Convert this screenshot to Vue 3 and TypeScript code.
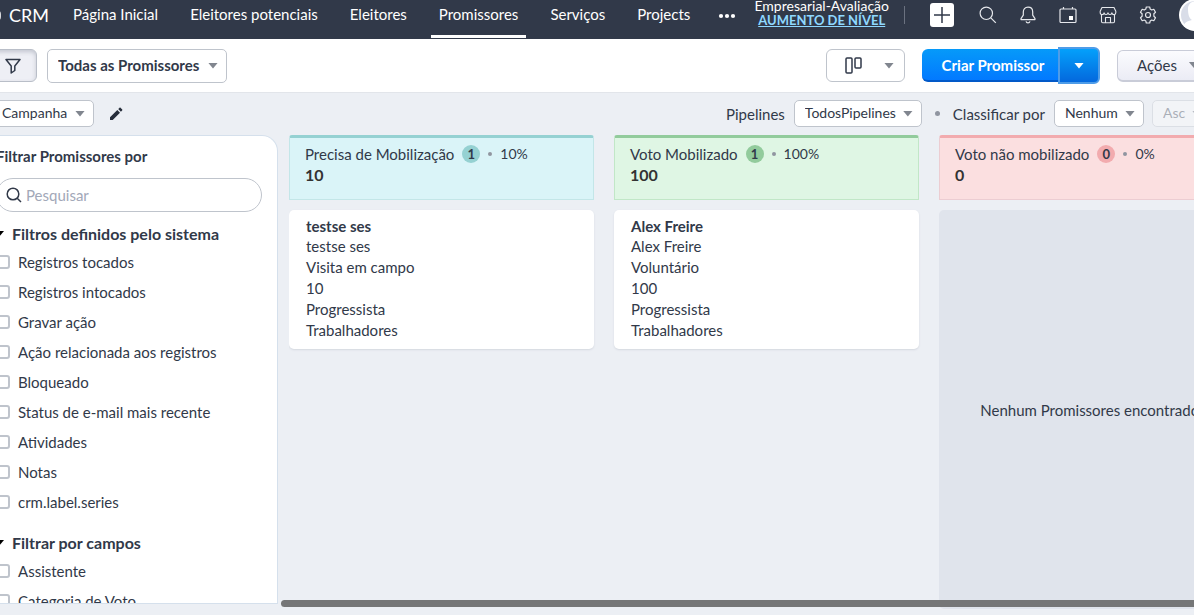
<script setup lang="ts">
import { ref } from 'vue'

interface Column {
  title: string
  count: number
  percent: string
  total: string
  tone: string
  cards: { name: string; lines: string[] }[]
}

const modules = ['Página Inicial', 'Eleitores potenciais', 'Eleitores', 'Promissores', 'Serviços', 'Projects']
const active = ref('Promissores')

const groups = [
  {
    title: 'Filtros definidos pelo sistema',
    items: [
      'Registros tocados',
      'Registros intocados',
      'Gravar ação',
      'Ação relacionada aos registros',
      'Bloqueado',
      'Status de e-mail mais recente',
      'Atividades',
      'Notas',
      'crm.label.series',
    ],
  },
  { title: 'Filtrar por campos', items: ['Assistente', 'Categoria de Voto'] },
]

const columns: Column[] = [
  {
    title: 'Precisa de Mobilização',
    count: 1,
    percent: '10%',
    total: '10',
    tone: 'teal',
    cards: [{ name: 'testse ses', lines: ['testse ses', 'Visita em campo', '10', 'Progressista', 'Trabalhadores'] }],
  },
  {
    title: 'Voto Mobilizado',
    count: 1,
    percent: '100%',
    total: '100',
    tone: 'green',
    cards: [{ name: 'Alex Freire', lines: ['Alex Freire', 'Voluntário', '100', 'Progressista', 'Trabalhadores'] }],
  },
  { title: 'Voto não mobilizado', count: 0, percent: '0%', total: '0', tone: 'red', cards: [] },
]
</script>

<template>
  <div class="viewport">
    <div class="page">
      <header class="topbar">
        <a class="brand" href="#">
          <svg width="21" height="18" viewBox="0 0 21 18" fill="none" stroke="#fff" stroke-width="1.6">
            <rect x="8" y="4" width="12" height="11" rx="4" />
          </svg>
          <span>CRM</span>
        </a>
        <nav class="modules">
          <a
            v-for="m in modules"
            :key="m"
            href="#"
            :class="{ active: m === active }"
            @click.prevent="active = m"
          >{{ m }}</a>
        </nav>
        <button class="plain more" aria-label="Mais">
          <svg width="18" height="6" viewBox="0 0 18 6" fill="#fff">
            <circle cx="3" cy="3" r="2.1" /><circle cx="9" cy="3" r="2.1" /><circle cx="15" cy="3" r="2.1" />
          </svg>
        </button>
        <div class="tools">
          <div class="plan">
            <span>Empresarial-Avaliação</span>
            <a href="#">AUMENTO DE NÍVEL</a>
          </div>
          <span class="divider"></span>
          <button class="plain add" aria-label="Criar">
            <svg width="24" height="24" viewBox="0 0 24 24" fill="none" stroke="#313949" stroke-width="1.5">
              <path d="M12 4v16M4 12h16" />
            </svg>
          </button>
          <button class="plain" aria-label="Buscar">
            <svg width="18" height="18" viewBox="0 0 18 18" fill="none" stroke="#e6e8ec" stroke-width="1.2">
              <circle cx="7.3" cy="7.3" r="6.2" /><path d="M11.8 11.8l5 5" />
            </svg>
          </button>
          <button class="plain" aria-label="Notificações">
            <svg width="18" height="18" viewBox="0 0 18 18" fill="none" stroke="#e6e8ec" stroke-width="1.2" stroke-linejoin="round">
              <path d="M9 1.2C5.9 1.2 4.3 3.5 4.3 6v3.2L2 12.6v1h14v-1l-2.3-3.4V6C13.7 3.5 12.1 1.2 9 1.2z" />
              <path d="M7 15.300c.3 1 1.100 1.500 2 1.500s1.700-.5 2-1.500" />
            </svg>
          </button>
          <button class="plain" aria-label="Calendário">
            <svg width="18" height="18" viewBox="0 0 18 18" fill="none" stroke="#e6e8ec" stroke-width="1.2">
              <rect x="1" y="3" width="16" height="13.5" rx="1" /><path d="M4.5 1v2M13.5 1v2" />
              <rect x="10" y="10" width="4" height="4" fill="#fff" stroke="none" />
            </svg>
          </button>
          <button class="plain" aria-label="Marketplace">
            <svg width="18" height="18" viewBox="0 0 18 18" fill="none" stroke="#e6e8ec" stroke-width="1.1" stroke-linejoin="round">
              <path d="M3 1.500h12l1.800 3.800v1.500c0 2.400-3.500 2.400-3.900 0 -.4 2.200-3.500 2.200-3.900 0 -.4 2.200-3.500 2.200-3.900 0 -.4 2.400-3.900 2.400-3.900 0V5.300z" />
              <path d="M2.500 9v6.500c0 .8.400 1.200 1.200 1.200h10.600c.8 0 1.200-.4 1.200-1.200V9M6.500 16.500v-5h5v5" />
            </svg>
          </button>
          <button class="plain" aria-label="Configurações">
            <svg width="18" height="18" viewBox="0 0 18 18" fill="none" stroke="#e6e8ec" stroke-width="1.2" stroke-linejoin="round">
              <path d="M7.300 1h3.400l.5 2.100 1.500.9 2.100-.7 1.700 2.900-1.600 1.500v2.600l1.600 1.500-1.700 2.900-2.100-.7-1.500.9-.5 2.100H7.300l-.5-2.100-1.500-.9-2.100.7-1.700-2.900 1.600-1.500V7.700L1.500 6.200l1.700-2.900 2.100.7 1.500-.9z" />
              <circle cx="9" cy="9" r="2.5" />
            </svg>
          </button>
          <button class="plain avatar" aria-label="Perfil">
            <svg width="32" height="32" viewBox="0 0 32 32">
              <circle cx="16" cy="16" r="16" fill="#fff" /><circle cx="16" cy="16" r="14" fill="#d9dde8" />
              <path d="M9 10c0-10 14-10 14 0 0 5-1 9-4 11 5 1 8 3 8 6a16 16 0 0 1-22 0c0-3 3-5 8-6-3-2-4-6-4-11z" fill="#fff" />
            </svg>
          </button>
        </div>
      </header>

      <div class="toolbar">
        <button class="filter-toggle" aria-label="Filtro">
          <svg width="16" height="16" viewBox="0 0 16 16" fill="none" stroke="#313949" stroke-width="1.5" stroke-linejoin="round">
            <path d="M1 1.500h14L9.800 8v4.500l-3.600 2.500V8z" />
          </svg>
        </button>
        <span class="pick view">
          <select aria-label="Visualização"><option>Todas as Promissores</option></select>
        </span>
        <div class="actions">
          <button class="layout" aria-label="Modo de exibição">
            <svg width="17" height="17" viewBox="0 0 17 17" fill="none" stroke="#313949" stroke-width="1.5">
              <rect x="1" y="1" width="6" height="15" rx="1" /><rect x="10" y="1" width="6" height="10" rx="1" />
            </svg>
            <i class="caret"></i>
          </button>
          <div class="split">
            <button class="create">Criar Promissor</button>
            <button class="create-more" aria-label="Mais opções"><i class="caret"></i></button>
          </div>
          <button class="acts">Ações<i class="caret"></i></button>
        </div>
      </div>

      <div class="subbar">
        <span class="pick campaign">
          <select aria-label="Modo"><option>Campanha</option></select>
        </span>
        <button class="plain" aria-label="Editar">
          <svg width="14" height="14" viewBox="0 0 14 14" fill="#272e3b">
            <path d="M1 10.300L8.300 3l2.700 2.700L3.700 13H1zM9.200 2.100l1.200-1.200c.4-.4.9-.4 1.300 0l1.400 1.400c.4.400.4.900 0 1.300l-1.200 1.200z" />
          </svg>
        </button>
        <div class="sorting">
          <label for="pipe">Pipelines</label>
          <span class="pick pipe"><select id="pipe"><option>TodosPipelines</option></select></span>
          <span class="dot"></span>
          <label for="sort">Classificar por</label>
          <span class="pick sort"><select id="sort"><option>Nenhum</option></select></span>
          <span class="pick order"><select aria-label="Ordem" disabled><option>Asc</option></select></span>
        </div>
      </div>

      <main class="content">
        <aside class="sidebar">
          <h2>Filtrar Promissores por</h2>
          <div class="search">
            <svg width="16" height="16" viewBox="0 0 16 16" fill="none" stroke="#313949" stroke-width="1.5">
              <circle cx="7" cy="7" r="5.8" /><path d="M11.2 11.2l3.800 3.800" />
            </svg>
            <input type="search" placeholder="Pesquisar" aria-label="Pesquisar" />
          </div>
          <section v-for="g in groups" :key="g.title">
            <h3><i class="caret"></i>{{ g.title }}</h3>
            <label v-for="item in g.items" :key="item"><input type="checkbox" />{{ item }}</label>
          </section>
        </aside>

        <div class="board">
          <section v-for="c in columns" :key="c.title" class="column">
            <header :class="['stage', c.tone]">
              <div class="stage-line">
                <span class="name">{{ c.title }}</span>
                <span class="count">{{ c.count }}</span>
                <span class="dot small"></span>
                <span>{{ c.percent }}</span>
              </div>
              <strong>{{ c.total }}</strong>
            </header>
            <article v-for="card in c.cards" :key="card.name" class="card">
              <a href="#">{{ card.name }}</a>
              <p v-for="line in card.lines" :key="line">{{ line }}</p>
            </article>
            <div v-if="!c.cards.length" class="empty">Nenhum Promissores encontrado.</div>
          </section>
        </div>
        <div class="scrollbar"></div>
      </main>
    </div>
  </div>
</template>

<style>
body {
  margin: 0;
  background: #eceff4;
}
</style>

<style scoped>
* {
  box-sizing: border-box;
}
.viewport {
  height: 100vh;
  overflow: hidden;
  background: #eceff4;
  color: #313949;
  font: 15px/20px Lato, "Liberation Sans", sans-serif;
}
.page {
  height: 100%;
  margin: 0 -32px 0 -20px;
  display: flex;
  flex-direction: column;
}
button,
select,
input {
  font: inherit;
  color: inherit;
  margin: 0;
}
a {
  color: inherit;
  text-decoration: none;
}
svg {
  display: block;
  flex: none;
}
.plain {
  padding: 0;
  border: 0;
  background: none;
}
.caret {
  flex: none;
  width: 10px;
  height: 6px;
  background: #81868f;
  clip-path: polygon(0 0, 100% 0, 50% 100%);
}

.topbar {
  flex: none;
  height: 39px;
  display: flex;
  align-items: flex-start;
  background: #313949;
  color: #fff;
  overflow: hidden;
}
.brand {
  display: flex;
  align-items: center;
  gap: 8px;
  height: 29px;
  font-size: 18px;
}
.modules {
  display: flex;
  gap: 16px;
  margin-left: 16px;
}
.modules a {
  height: 38px;
  padding: 4px 8px 0;
  border-bottom: 3px solid transparent;
}
.modules a.active {
  border-color: #fff;
}
.more {
  height: 32px;
  margin-left: 20px;
}
.tools {
  display: flex;
  align-items: center;
  height: 30px;
  margin-left: auto;
  padding-right: 15px;
  gap: 22px;
}
.plan {
  display: flex;
  flex-direction: column;
  align-items: center;
  margin-bottom: 4px;
  font-size: 14px;
  line-height: 15px;
}
.plan a {
  color: #8fd8ff;
  font-size: 13px;
  font-weight: 700;
  text-decoration: underline;
}
.divider {
  width: 1px;
  height: 18px;
  margin: 0 3px 0 -7px;
  background: #6b7280;
}
.add {
  margin-right: 3px;
  background: #fff;
  border-radius: 3px;
}

.toolbar {
  flex: none;
  height: 54px;
  display: flex;
  align-items: center;
  background: #fff;
  border-bottom: 1px solid #e2e5ea;
}
.filter-toggle {
  width: 57px;
  height: 33px;
  padding: 0 15px 0 0;
  display: flex;
  align-items: center;
  justify-content: flex-end;
  border: 1px solid #b9bec8;
  border-radius: 6px;
  background: #eeeff5;
  box-shadow: inset 0 2px 4px #c3c6d0;
}
.pick {
  display: grid;
  align-items: center;
}
.pick select {
  grid-area: 1 / 1;
  width: 100%;
  height: 27px;
  padding: 0 24px 2px 10px;
  border: 1px solid #bfc4cc;
  border-radius: 5px;
  background: #fff;
  appearance: none;
  font-size: 14px;
}
.pick::after {
  content: "";
  grid-area: 1 / 1;
  justify-self: end;
  width: 10px;
  height: 6px;
  margin-right: 9px;
  background: #81868f;
  clip-path: polygon(0 0, 100% 0, 50% 100%);
  pointer-events: none;
}
.view {
  width: 180px;
  margin-left: 10px;
}
.view select {
  height: 34px;
  font-size: 15px;
  font-weight: 700;
}
.actions {
  margin-left: auto;
  display: flex;
  align-items: center;
  gap: 17px;
}
.layout {
  width: 79px;
  height: 33px;
  padding: 0 10px 0 18px;
  display: flex;
  align-items: center;
  justify-content: space-between;
  border: 1px solid #bfc4cc;
  border-radius: 6px;
  background: #fff;
}
.split {
  display: flex;
  align-items: center;
}
.create {
  width: 136px;
  height: 33px;
  padding: 0 0 0 6px;
  border: 0;
  border-bottom: 2px solid #0259c8;
  border-radius: 6px 0 0 6px;
  background: linear-gradient(#069af9, #0279ff);
  color: #fff;
  font-weight: 700;
}
.create-more {
  width: 42px;
  height: 37px;
  display: grid;
  place-items: center;
  border: 2px solid #4e9ce8;
  border-radius: 0 6px 6px 0;
  background: linear-gradient(#04a0fb, #0468dd);
}
.create-more .caret {
  background: #fff;
}
.acts {
  width: 109px;
  height: 32px;
  padding: 0 26px 0 19px;
  display: flex;
  align-items: center;
  gap: 12px;
  border: 1px solid #c9ccd8;
  border-bottom-width: 2px;
  border-radius: 6px 0 0 6px;
  background: linear-gradient(#fbfbfe, #ebecf5);
}

.subbar {
  flex: none;
  height: 42px;
  padding-bottom: 1px;
  display: flex;
  align-items: center;
}
.campaign {
  width: 114px;
  margin-right: 15px;
}
.campaign select {
  padding-left: 21px;
}
.sorting {
  margin-left: auto;
  display: flex;
  align-items: center;
}
.sorting .pick {
  margin-left: 9px;
}
.pipe {
  width: 128px;
}
.sort {
  width: 90px;
}
.sorting .order {
  width: 74px;
  margin-left: 8px;
  opacity: 0.5;
}
.order::after {
  margin-right: 24px;
}
.dot {
  width: 5px;
  height: 5px;
  margin: 0 13px;
  border-radius: 50%;
  background: #9095a0;
}
.dot.small {
  width: 4px;
  height: 4px;
  margin: 0 8px;
}

.content {
  flex: 1;
  min-height: 0;
  display: flex;
  gap: 11px;
  position: relative;
}
.sidebar {
  flex: none;
  width: 298px;
  margin-bottom: 11px;
  padding: 10px 16px 0;
  overflow: hidden;
  border: 1px solid #d5e0ec;
  border-left: 0;
  border-radius: 0 16px 0 0;
  background: #fff;
}
.sidebar h2 {
  margin: 0 0 12px;
  font-size: 15px;
  line-height: 20px;
}
.search {
  display: flex;
  align-items: center;
  gap: 4px;
  height: 34px;
  padding: 0 9px 1px;
  margin-right: -1px;
  border: 1px solid #bfc4cc;
  border-radius: 17px;
}
.search input {
  flex: 1;
  min-width: 0;
  padding: 0;
  border: 0;
  outline: 0;
  background: none;
}
.search input::placeholder {
  color: #a2a8b8;
  opacity: 1;
}
.sidebar section {
  padding-bottom: 4px;
}
.sidebar h3 {
  display: flex;
  align-items: center;
  gap: 8px;
  margin: 12px 0 3px -2px;
  font-size: 16px;
  line-height: 20px;
}
.sidebar h3 .caret {
  background: #000;
}
.sidebar label {
  display: flex;
  align-items: center;
  gap: 8px;
  height: 30px;
}
.sidebar input[type='checkbox'] {
  appearance: none;
  flex: none;
  width: 14px;
  height: 14px;
  border: 2px solid #bfc4cc;
  border-radius: 3px;
}

.board {
  flex: 1;
  min-width: 0;
  display: flex;
  gap: 20px;
  overflow: hidden;
  margin-bottom: 6px;
}
.column {
  flex: none;
  width: 305px;
  display: flex;
  flex-direction: column;
  gap: 10px;
}
.stage {
  height: 65px;
  padding: 7px 15px 0;
  border: 1px solid;
  border-top-width: 3px;
  border-radius: 3px 3px 0 0;
}
.teal {
  background: #daf4f8;
  border-color: #95d1d2 #c3e6e8 #c3e6e8;
}
.green {
  background: #dff6e4;
  border-color: #92cb9c #c1e7c7 #c1e7c7;
}
.red {
  background: #fbdfe0;
  border-color: #f2abae #eccdd2 #eccdd2;
}
.stage-line {
  display: flex;
  align-items: center;
  height: 18px;
  font-size: 14px;
}
.name {
  font-size: 15px;
}
.count {
  width: 18px;
  height: 18px;
  margin-left: 8px;
  border-radius: 50%;
  font-size: 13px;
  font-weight: 700;
  line-height: 18px;
  text-align: center;
}
.teal .count {
  background: #95d1d2;
}
.green .count {
  background: #92cb9c;
}
.red .count {
  background: #f2abae;
}
.stage strong {
  display: block;
  color: #333;
  font-size: 16px;
  line-height: 24px;
}
.card {
  height: 139px;
  padding: 7px 17px 0;
  border-radius: 5px;
  background: #fff;
  box-shadow: 0 1px 2px #d4d8df;
}
.card a {
  display: block;
  font-weight: 700;
  line-height: 19px;
}
.card p {
  margin: 0;
  line-height: 21px;
}
.empty {
  flex: 1;
  display: grid;
  place-items: center;
  border-radius: 5px;
  background: #e0e4ec;
}
.scrollbar {
  position: absolute;
  left: 301px;
  right: 0;
  bottom: 8px;
  height: 7px;
  border-radius: 4px;
  background: #757677;
}
</style>
